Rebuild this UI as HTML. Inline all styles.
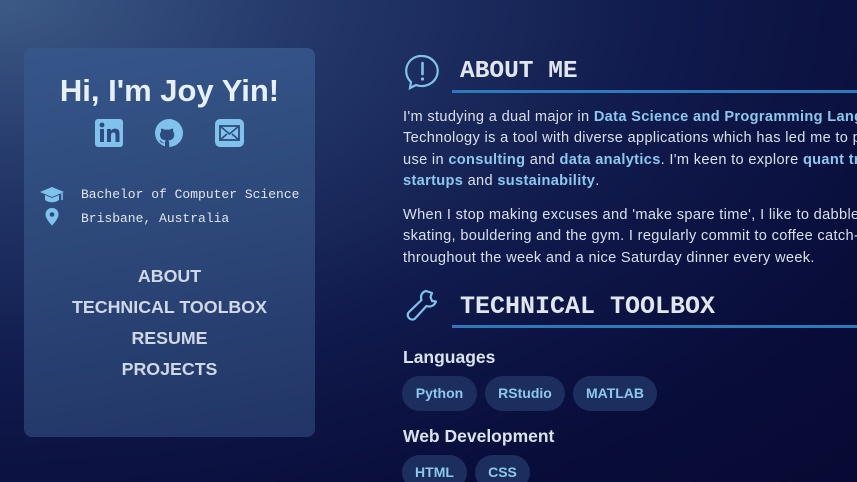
<!DOCTYPE html>
<html><head><meta charset="utf-8"><style>
*{margin:0;padding:0;box-sizing:border-box}
html{background:#070a33;width:857px;height:482px;overflow:hidden}
body{width:857px;height:482px;overflow:hidden;font-family:"Liberation Sans",sans-serif;
background:radial-gradient(ellipse at 0% 0%,#3d5a86 0%,#24386a 25%,#101a4c 55%,#090d3a 80%,#070a33 100%);position:relative;color:#dde4ee}
.card{position:absolute;left:24px;top:48px;width:291px;height:389px;border-radius:8px;
background:linear-gradient(170deg,#36568a 0%,#2c4778 50%,#213566 100%)}
h1{position:absolute;left:0;width:291px;top:25px;text-align:center;font-size:31px;font-weight:bold;color:#e6f0f6}
.icons{position:absolute;top:70px;left:71px}
.info{position:absolute;font-family:"Liberation Mono",monospace;font-size:13px;color:#e0e6ee}
.nav{position:absolute;left:0;width:291px;text-align:center;font-size:17.8px;font-weight:bold;color:#cfd8e4}
.sec{position:absolute;left:404px}
.title{position:absolute;left:460px;font-family:"Liberation Mono",monospace;font-weight:bold;font-size:24.5px;color:#dfe6ec}
.line{position:absolute;left:452px;width:405px;height:3px;background:#2e7ab8}
.clip{position:absolute;left:403px;top:0;width:454px;height:482px;overflow:hidden}
.p{position:absolute;left:0;font-size:14.6px;line-height:21.3px;color:#d8e0ea;white-space:nowrap;letter-spacing:.33px}
.p b{color:#8cc8ee}
.h3{position:absolute;left:403px;font-size:17.5px;font-weight:bold;color:#dbe3ea}
.pill{position:absolute;height:35px;border-radius:18px;background:#1c2e5e;color:#8cc8ee;font-weight:bold;font-size:14px;text-align:center;line-height:35px}
</style></head><body>
<div class="card">
<h1>Hi, I'm Joy Yin!</h1>
<svg class="icons" width="150" height="30" viewBox="0 0 150 30">
<rect x="0" y="1" width="28" height="28" rx="3" fill="#7fc2ec"/>
<rect x="5" y="11" width="4" height="13" fill="#2f4a7c"/><circle cx="7" cy="7" r="2.4" fill="#2f4a7c"/>
<path d="M12 11h4v2c1-2 3-2.5 5-2.3 3 .3 3.5 2.5 3.5 5V24h-4v-7c0-1.5-.5-2.5-2-2.5s-2.5 1-2.5 2.5V24h-4z" fill="#2f4a7c"/>
<circle cx="74" cy="15" r="14" fill="#7fc2ec"/>
<path d="M70 29v-4c-4 1-5-2-5.5-3 1 .2 2 1 2.5 2 1 1 2 1 3 .5 0-1 .5-1.5 1-2-4-.5-6-2-6-6 0-1.2.5-2.3 1.2-3-.2-.6-.3-1.8.2-3 1.2 0 2.5.8 3.2 1.3 1.5-.4 3.5-.4 5 0 .7-.5 2-1.3 3.2-1.3.5 1.2.4 2.4.2 3 .7.7 1.2 1.8 1.2 3 0 4-2 5.5-6 6 .6.5 1 1.3 1 2.5V29z" fill="#2f4a7c"/>
<rect x="120" y="1" width="29" height="28" rx="5" fill="#7fc2ec"/>
<rect x="125" y="8" width="19" height="14" fill="none" stroke="#2f4a7c" stroke-width="1.8"/>
<path d="M125 8l9.5 8 9.5-8M125 22l7-6M144 22l-7-6" fill="none" stroke="#2f4a7c" stroke-width="1.6"/>
</svg>
<svg style="position:absolute;left:15px;top:138px" width="26" height="44" viewBox="0 0 26 44">
<path d="M1 6l12-5 12 5-12 5z" fill="#7fc2ec"/><path d="M6 9v5c4 3 10 3 14 0V9l-7 3z" fill="#7fc2ec"/><path d="M23 7v7" stroke="#7fc2ec" stroke-width="1.5"/>
<path d="M13 22c-4 0-6.5 3-6.5 6.5 0 4.5 6.5 11 6.5 11s6.5-6.5 6.5-11c0-3.5-2.5-6.5-6.5-6.5z" fill="#7fc2ec"/><circle cx="13" cy="28.5" r="2.3" fill="#2d4a7c"/>
</svg>
<div class="info" style="left:57px;top:139px">Bachelor of Computer Science</div>
<div class="info" style="left:57px;top:163px">Brisbane, Australia</div>
<div class="nav" style="top:218px">ABOUT</div>
<div class="nav" style="top:249px">TECHNICAL TOOLBOX</div>
<div class="nav" style="top:280px">RESUME</div>
<div class="nav" style="top:311px">PROJECTS</div>
</div>

<svg class="sec" style="left:404px;top:54px" width="38" height="36" viewBox="0 0 38 36">
<path d="M18 2a16 15 0 1 1-6 29l-6 3 1-6A15 15 0 0 1 18 2z" fill="none" stroke="#7fc2ec" stroke-width="2.2"/>
<path d="M18.5 9v11" stroke="#7fc2ec" stroke-width="2.6" stroke-linecap="round"/><circle cx="18.5" cy="25" r="1.6" fill="#7fc2ec"/>
</svg>
<div class="title" style="top:58px">ABOUT ME</div>
<div class="line" style="top:90px"></div>
<div class="clip">
<div class="p" style="top:107px">I'm studying a dual major in <b>Data Science and Programming Languages</b><br>Technology is a tool with diverse applications which has led me to pursue<br>use in <b>consulting</b> and <b>data analytics</b>. I'm keen to explore <b>quant trading</b><br><b>startups</b> and <b>sustainability</b>.</div>
<div class="p" style="top:205px">When I stop making excuses and 'make spare time', I like to dabble in<br>skating, bouldering and the gym. I regularly commit to coffee catch-ups<br>throughout the week and a nice Saturday dinner every week.</div>
</div>

<svg class="sec" style="left:405px;top:288px" width="36" height="36" viewBox="0 0 36 36">
<path d="M21 3c-4 1-6 5-4.5 9L4 24c-2 2-1.5 5 .5 6.5s4.5 1.5 6-.5l11-12c4 1.5 8-.5 9.5-4.5l-4-.5-1.5-4L27 5z" fill="none" stroke="#7fc2ec" stroke-width="2.2" stroke-linejoin="round"/>
</svg>
<div class="title" style="top:292px;font-size:25px">TECHNICAL TOOLBOX</div>
<div class="line" style="top:325px"></div>
<div class="h3" style="top:347px">Languages</div>
<div class="pill" style="left:402px;top:376px;width:75px">Python</div>
<div class="pill" style="left:485px;top:376px;width:80px">RStudio</div>
<div class="pill" style="left:573px;top:376px;width:84px">MATLAB</div>
<div class="h3" style="top:426px">Web Development</div>
<div class="pill" style="left:402px;top:455px;width:65px">HTML</div>
<div class="pill" style="left:475px;top:455px;width:55px">CSS</div>
</body></html>
